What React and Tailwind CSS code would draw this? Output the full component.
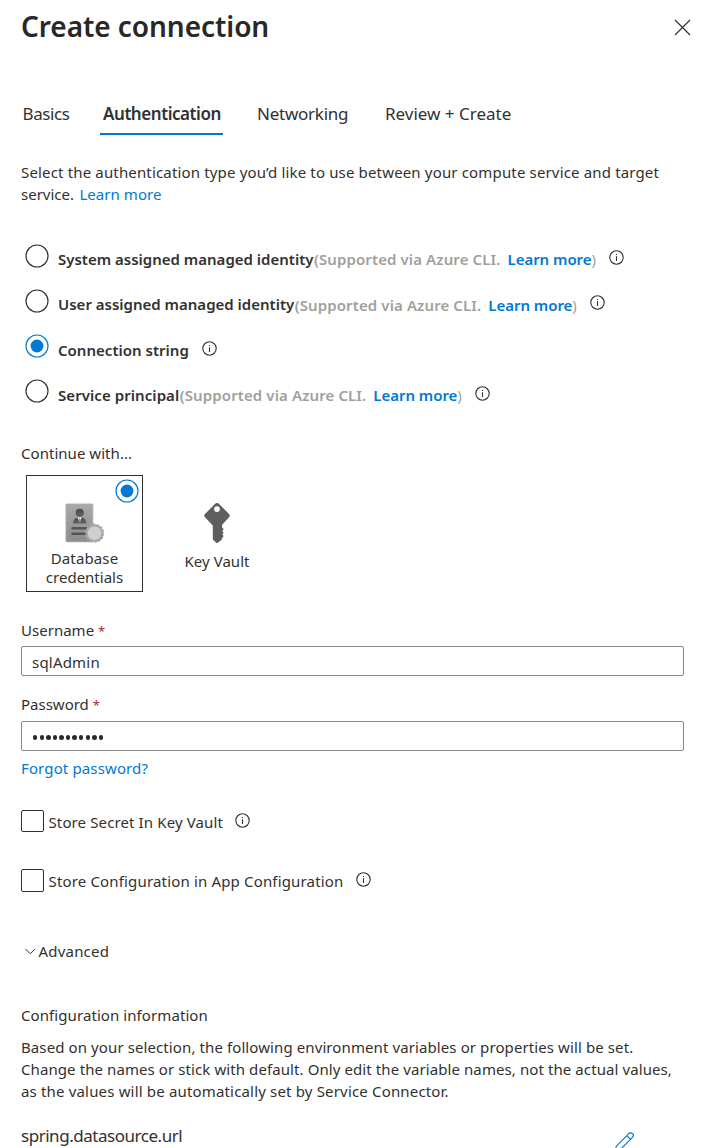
const Info = ({ className = '' }) => (
  <svg className={`h-[15px] w-[15px] shrink-0 ${className}`} viewBox="0 0 15 15" fill="none">
    <circle cx="7.5" cy="7.5" r="6.7" stroke="#323130" strokeWidth="1.1" />
    <path d="M7.5 6.3v4.6M7.5 3.9v1.2" stroke="#323130" strokeWidth="1.1" />
  </svg>
);

const Radio = ({ checked = false }) => (
  <svg className="h-[24px] w-[24px] shrink-0" viewBox="0 0 24 24" fill="none">
    <circle cx="12" cy="12" r="11" stroke={checked ? '#0078d4' : '#323130'} strokeWidth="1.15" />
    {checked && <circle cx="12" cy="12" r="6.4" fill="#0078d4" />}
  </svg>
);

const Cli = ({ className = '' }) => (
  <span className={`ml-[0.5px] text-[#a19f9d] ${className}`}>
    <span className="tracking-[0.11px]">(Supported via Azure CLI.</span>
    <a className="ml-[7px] tracking-[-0.03px] text-[#0078d4]">Learn more</a>
    <span className="font-normal">)</span>
  </span>
);

const RadioRow = ({ label, checked, labelClass = '', cli = true, cliClass = '' }) => (
  <div className="flex h-[45.3px] items-start pl-[4px]">
    <span className="pt-[7.5px]"><Radio checked={checked} /></span>
    <div className="ml-[9px] flex pt-[12px] font-semibold leading-[22px]">
      <span className={labelClass}>{label}</span>
      {cli && <Cli className={cliClass} />}
    </div>
    <Info className="ml-[13px] mt-[14px]" />
  </div>
);

const CheckRow = ({ label, labelClass, boxClass = '' }) => (
  <div className="flex h-[24px] items-start">
    <span className={`w-[23px] rounded-[2px] border-[1.3px] border-[#323130] ${boxClass}`} />
    <span className={`ml-[4.5px] leading-[24px] ${labelClass}`}>{label}</span>
    <Info className="ml-[12.5px] mt-[3px]" />
  </div>
);

const Required = () => <span className="text-[13px] text-[#a4262c]">*</span>;

const Credentials = () => (
  <svg className="h-[40px] w-[40px]" viewBox="0 0 40 40">
    <defs>
      <linearGradient id="page" x1="0" y1="0" x2="0" y2="1">
        <stop offset="0" stopColor="#a9a9a9" />
        <stop offset="1" stopColor="#8c8c8c" />
      </linearGradient>
      <linearGradient id="person" x1="0" y1="0" x2="0" y2="1">
        <stop offset="0" stopColor="#4a4a4a" />
        <stop offset="1" stopColor="#636363" />
      </linearGradient>
    </defs>
    <rect x="0.9" y="0.9" width="27" height="38" rx="0.8" fill="url(#page)" stroke="#b5b5b5" strokeWidth="0.8" />
    <path d="M8 20.5c0-3.600 2.200-6.200 6.700-6.200s6.600 2.600 6.600 6.200z" fill="url(#person)" />
    <path d="M12.3 14.2l2.4 4.6 2.2-4.6z" fill="#f2f2f2" />
    <path d="M14.2 15.2h1l.6 2.8-1.1 1.5-1-1.5z" fill="#999" />
    <circle cx="14.7" cy="9.8" r="4.1" fill="url(#person)" />
    <path d="M7.500 25.3h14.500M7.500 30.7h13" stroke="#555" strokeWidth="2.6" strokeLinecap="round" />
    <circle cx="29.6" cy="30.2" r="8.9" fill="#a8a8a8" stroke="#a8a8a8" strokeWidth="1.4" strokeDasharray="2.3 1.7" />
    <circle cx="29.6" cy="30.2" r="6.8" fill="#cfcfcf" />
  </svg>
);

const Key = () => (
  <svg className="h-[40px] w-[26px]" viewBox="0 0 26 40">
    <path
      fillRule="evenodd"
      fill="#5f5e5c"
      d="M11.2.8a2.6 2.6 0 0 1 3.6 0L25 10.9a2.4 2.4 0 0 1 0 3.4L18 22v2.200l1.300 1.200v1.500l-1.200 1 1.200 1.100v1.500l-1.200 1 1.200 1.100v1.600L17.800 35v1.800L14 39.6a1.4 1.4 0 0 1-2 0L8.8 36.6V22.4L1 14.3a2.4 2.4 0 0 1 0-3.4zM13 3.2a2.9 2.9 0 1 0 0 5.8 2.9 2.9 0 0 0 0-5.8z"
    />
  </svg>
);

export default function App() {
  return (
    <main className="h-[1148px] w-[706px] overflow-hidden bg-white pl-[21px] font-['Noto_Sans','Segoe_UI',sans-serif] text-[15px] leading-[22px] text-[#323130]">
      <header className="flex h-[50px] items-start justify-between pr-[15px]">
        <h1 className="text-[28px] font-semibold leading-[52px] tracking-[-0.06px] text-[#292827]">Create connection</h1>
        <svg className="mt-[19px] h-[17px] w-[17px]" viewBox="0 0 17 17" fill="none">
          <path d="M1 1l15 15M16 1L1 16" stroke="#323130" strokeWidth="1.2" />
        </svg>
      </header>

      <nav className="mt-[43px] flex h-[42px] text-[17px] leading-[42px]">
        <span className="ml-[1.500px] w-[77.500px] tracking-[-0.4px]">Basics</span>
        <span className="w-[123px] border-b-2 border-[#0078d4] pl-[3px] font-semibold tracking-[-0.44px]">Authentication</span>
        <span className="ml-[34px] w-[128px] tracking-[-0.25px]">Networking</span>
        <span>Review + Create</span>
      </nav>

      <p className="mt-[26px] whitespace-nowrap">
        <span className="tracking-[0.157px]">Select the authentication type you’d like to use between your compute service and target</span>
        <br />
        service. <a className="ml-[1.5px] tracking-[0.05px] text-[#0078d4]">Learn more</a>
      </p>

      <section className="mt-[31px] h-[182px]">
        <RadioRow label="System assigned managed identity" />
        <RadioRow label="User assigned managed identity" cliClass="pt-px" />
        <RadioRow label="Connection string" labelClass="tracking-[0.02px]" checked cli={false} />
        <RadioRow label="Service principal" labelClass="tracking-[0.07px]" />
      </section>

      <div className="mt-[24px] tracking-[0.04px]">Continue with...</div>
      <div className="ml-[5px] mt-[11px] flex h-[117px]">
        <div className="relative flex w-[117px] flex-col items-center border border-[#323130] pt-[27px] text-center leading-[19px]">
          <span className="absolute right-[3px] top-[2.5px]"><Radio checked /></span>
          <Credentials />
          <div className="mt-[6px]">
            <div className="tracking-[0.14px]">Database</div>
            <div>credentials</div>
          </div>
        </div>
        <div className="ml-[16px] flex w-[116px] flex-col items-center pt-[28px]">
          <Key />
          <div className="mt-[7px] tracking-[0.05px]">Key Vault</div>
        </div>
      </div>

      <div className="mt-[27px] h-[22px] tracking-[0.02px]">Username <Required /></div>
      <div className="mt-[5px] h-[30px] w-[663px] rounded-[2px] border border-[#8a8886] pl-[10px] leading-[30px] tracking-[0.2px]">sqlAdmin</div>
      <div className="mt-[17px] h-[22px]">Password <Required /></div>
      <div className="mt-[6px] flex h-[30px] w-[663px] items-center gap-[2.2px] rounded-[2px] border border-[#8a8886] pl-[11px] pt-[3px]">
        {Array.from({ length: 11 }, (_, i) => (
          <span key={i} className="h-[4.4px] w-[4.4px] rounded-full bg-[#292827]" />
        ))}
      </div>
      <div className="mt-[6px] tracking-[0.13px] text-[#0078d4]">Forgot password?</div>

      <div className="mt-[31px]">
        <CheckRow label="Store Secret In Key Vault" labelClass="tracking-[0.12px]" boxClass="h-[22px]" />
        <div className="mt-[35px]">
          <CheckRow label="Store Configuration in App Configuration" labelClass="tracking-[0.162px]" boxClass="h-[23px]" />
        </div>
      </div>

      <div className="mt-[47px] flex items-center">
        <svg className="ml-[4px] h-[7px] w-[11px]" viewBox="0 0 11 7" fill="none">
          <path d="M.5 1l4.800 4.800L10.100 1" stroke="#323130" strokeWidth="1" />
        </svg>
        <span className="ml-[2.5px] tracking-[0.2px]">Advanced</span>
      </div>

      <div className="mt-[42px] tracking-[0.08px]">Configuration information</div>
      <div className="mt-[10px] whitespace-nowrap">
        <div className="tracking-[0.1px]">Based on your selection, the following environment variables or properties will be set.</div>
        <div className="tracking-[0.09px]">Change the names or stick with default. Only edit the variable names, not the actual values,</div>
        <div className="tracking-[0.17px]">as the values will be automatically set by Service Connector.</div>
      </div>

      <div className="mt-[22px] flex justify-between pr-[72px]">
        <span className="text-[17px] leading-[24px] tracking-[-0.47px]">spring.datasource.url</span>
        <svg className="mt-[8px] h-[20px] w-[20px]" viewBox="0 0 20 20" fill="none" stroke="#0078d4" strokeWidth="1.2">
          <path d="M1 19.200l1.300-5L14.800 1.700a2.600 2.600 0 0 1 3.700 3.700L6 17.900zM12.800 3.700l3.700 3.700" />
        </svg>
      </div>
    </main>
  );
}
